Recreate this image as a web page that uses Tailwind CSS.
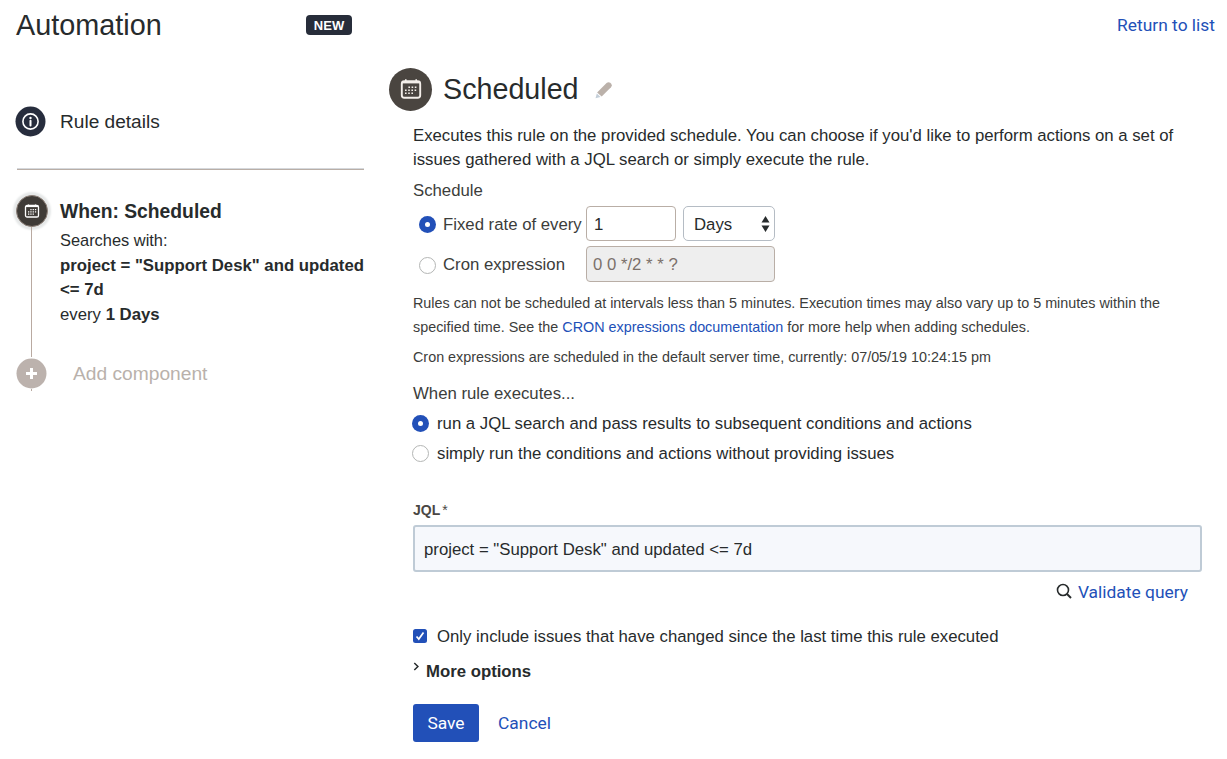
<!DOCTYPE html>
<html lang="en">
<head>
<meta charset="utf-8">
<title>Automation</title>
<script src="https://cdn.jsdelivr.net/npm/@tailwindcss/browser@4"></script>
</head>
<body class="bg-white text-[#272b2c] font-['Liberation_Sans',Arial,sans-serif] w-[1227px] h-[759px] overflow-hidden">
<header class="h-[50px] flex items-center pl-[16px] pr-[12px]">
  <h1 class="w-[290px] text-[28.8px] leading-[50px] whitespace-nowrap">Automation</h1>
  <span class="w-[46px] h-[20px] rounded-[4px] bg-[#272d3a] text-white text-[13px] font-bold flex items-center justify-center pt-px">NEW</span>
  <a class="ml-auto pt-px font-[Roboto] text-[17.4px] text-[#2250b8]">Return to list</a>
</header>
<div class="flex">
  <aside class="w-[389px] shrink-0 pl-[15px]">
    <div class="mt-[56px] h-[31px] flex items-center">
      <svg class="w-[31px] h-[31px]" viewBox="0 0 31 31"><circle cx="15.5" cy="15.5" r="15" fill="#272d3d"/><circle cx="15.5" cy="15.5" r="7.6" fill="none" stroke="#fff" stroke-width="1.6"/><circle cx="15.5" cy="12" r="1.2" fill="#fff"/><path d="M15.5 14.8v4.6" stroke="#fff" stroke-width="2" stroke-linecap="round"/></svg>
      <span class="ml-[14px] pt-px text-[19.1px]">Rule details</span>
    </div>
    <div class="ml-[2px] mt-[31px] w-[347px] h-[2px] border-t border-[#d5d8dc] bg-[#b9aea6]"></div>
    <div class="flex mt-[25px] h-[163px]">
      <div class="w-[33px] shrink-0 flex flex-col items-center">
        <div class="w-[32px] h-[32px] shrink-0 rounded-full bg-[#3f3b37] border border-[#8d8078] shadow-[0_0_2px_3px_#e6e8e8] flex items-center justify-center">
          <svg class="w-[16px] h-[16px]" viewBox="0 0 16 16" fill="none" stroke="#fff"><rect x="1.5" y="2.5" width="13" height="11.5" rx="1.6" stroke-width="1.3"/><path d="M2 3.2h12" stroke-width="1.8"/><path d="M4.5 1.4v2M11.5 1.4v2" stroke-width="1.2"/><path d="M6.3 6.6h6M4 8.9h8.3M4 11.2h6" stroke-width="1.2" stroke-dasharray="1.3 1"/></svg>
        </div>
        <div class="w-px h-[130px] bg-[#b9aaa1]"></div>
      </div>
      <div class="ml-[12px]">
        <div class="text-[19.3px] font-bold leading-[33px] whitespace-nowrap">When: Scheduled</div>
        <div class="text-[16.75px] leading-[24.7px] whitespace-nowrap"><span class="text-[16.4px]">Searches with:</span><br><b>project = "Support Desk" and updated<br>&lt;= 7d</b><br>every <b>1 Days</b></div>
      </div>
    </div>
    <div class="flex h-[32px]">
      <div class="w-[33px] flex flex-col items-center">
        <svg class="w-[31px] h-[31px] shrink-0" viewBox="0 0 31 31"><circle cx="15.5" cy="15.5" r="15" fill="#bcb2ad"/><path d="M15.5 10v11M10 15.5h11" stroke="#fff" stroke-width="3"/></svg>
        <div class="w-px h-[2px] shrink-0 bg-[#b9aaa1]"></div>
      </div>
      <span class="ml-[25px] text-[19.2px] leading-[31px] text-[#b9b1ab]">Add component</span>
    </div>
  </aside>
  <main class="w-[838px] text-[16.76px]">
    <div class="mt-[17px] h-[44px] flex items-center">
      <div class="w-[43px] h-[43px] rounded-full bg-[#4a4540] flex items-center justify-center">
        <svg class="w-[22px] h-[22px]" viewBox="0 0 22 22" fill="none" stroke="#f4efea"><rect x="1.8" y="3.3" width="18.4" height="16.4" rx="2.5" stroke-width="1.9"/><path d="M2.500 4.200h17" stroke-width="2.400"/><path d="M5.800 1.200v3M16.200 1.200v3" stroke-width="1.600"/><path d="M8.400 9.200h9M5 12.200h12.600M5 15.200h9" stroke-width="1.600" stroke-dasharray="1.600 1.600"/></svg>
      </div>
      <h2 class="ml-[11px] text-[28.7px] leading-[44px]">Scheduled</h2>
      <svg class="ml-[16px] mt-px w-[18px] h-[18px]" viewBox="0 0 17 17"><path d="M2 10.800 10.900 2q1.800-1.700 3.500-.3l.9.900q1.500 1.600-.2 3.300L6.300 14.700z" fill="#bbb1aa"/><path d="M1.700 11.800 5.200 15.200.500 16.400z" fill="#c3ced8"/></svg>
    </div>
    <div class="pl-[24px] pr-[25px]">
      <p class="mt-[13px] leading-[24px] whitespace-nowrap">Executes this rule on the provided schedule. You can choose if you'd like to perform actions on a set of<br>issues gathered with a JQL search or simply execute the rule.</p>
      <div class="mt-[7px] h-[24px] leading-[24px] text-[#3c3d3b]">Schedule</div>
      <div class="mt-[3px] h-[35px] flex items-center pl-[6px]">
        <span class="w-[17px] h-[17px] mt-px rounded-full bg-[#2250b8] flex items-center justify-center"><i class="w-[5px] h-[5px] rounded-full bg-white"></i></span>
        <span class="ml-[7px] w-[143px] pt-[2px] text-[#3c3d3b] whitespace-nowrap">Fixed rate of every</span>
        <span class="w-[90px] h-[35px] rounded-[4px] border border-[#b9aea6] pl-[7px] leading-[35px]">1</span>
        <span class="ml-[7px] w-[92px] h-[35px] rounded-[5px] border border-[#b5bcc4] pl-[10px] pr-[4px] flex items-center justify-between"><span class="pt-[2px]">Days</span><svg class="w-[9px] h-[16px]" viewBox="0 0 9 16"><path d="M4.5 0 8.5 6.5h-8zM.5 9.5h8L4.5 16z" fill="#272b2c"/></svg></span>
      </div>
      <div class="mt-[5px] h-[36px] flex items-center pl-[6px]">
        <span class="w-[17px] h-[17px] rounded-full border border-[#b4b6b5] mt-[2px]"></span>
        <span class="ml-[7px] w-[143px] pt-[2px] text-[#3c3d3b]">Cron expression</span>
        <span class="w-[189px] h-[36px] rounded-[4px] border border-[#b9aea6] bg-[#eeeeee] pl-[6px] leading-[36px] text-[#7b706a]">0 0 */2 * * ?</span>
      </div>
      <p class="mt-[9px] text-[14.37px] leading-[24px] whitespace-nowrap text-[#3c3d3b]">Rules can not be scheduled at intervals less than 5 minutes. Execution times may also vary up to 5 minutes within the<br>specified time. See the <a class="text-[#2250b8]">CRON expressions documentation</a> for more help when adding schedules.</p>
      <p class="mt-[6px] text-[14.37px] leading-[24px] whitespace-nowrap text-[#3c3d3b]">Cron expressions are scheduled in the default server time, currently: 07/05/19 10:24:15 pm</p>
      <div class="mt-[13px] h-[24px] leading-[24px] text-[#3c3d3b]">When rule executes...</div>
      <div class="mt-[2px] h-[30px] flex items-center -ml-px">
        <span class="w-[17px] h-[17px] rounded-full bg-[#2250b8] flex items-center justify-center"><i class="w-[5px] h-[5px] rounded-full bg-white"></i></span>
        <span class="ml-[8px] pt-[2px]">run a JQL search and pass results to subsequent conditions and actions</span>
      </div>
      <div class="h-[30px] flex items-center -ml-px">
        <span class="w-[17px] h-[17px] rounded-full border border-[#b4b6b5]"></span>
        <span class="ml-[8px] pt-[2px]">simply run the conditions and actions without providing issues</span>
      </div>
      <div class="mt-[32px] h-[20px] leading-[20px] text-[14px] font-bold text-[#4a4744]">JQL<span class="ml-[2px] font-normal">*</span></div>
      <div class="mt-[5px] h-[47px] w-[789px] rounded-[3px] border-2 border-[#bfcbd6] bg-[#f6f8fc] pl-[9px] leading-[45px]">project = "Support Desk" and updated &lt;= 7d</div>
      <div class="mt-[8px] h-[24px] flex items-center justify-end pr-[14px]">
        <svg class="w-[16px] h-[16px] -mt-[2px]" viewBox="0 0 16 16" fill="none" stroke="#272b2c" stroke-width="1.6"><circle cx="7" cy="7" r="5.5"/><path d="m11 11 4 4" stroke-width="1.9"/></svg>
        <a class="ml-[6px] font-[Roboto] text-[17.4px] text-[#2250b8]">Validate query</a>
      </div>
      <div class="mt-[20px] h-[24px] flex items-center">
        <svg class="w-[14px] h-[14px]" viewBox="0 0 14 14"><rect width="14" height="14" rx="2.5" fill="#2250b8"/><path d="m3.5 7.5 2.3 2.6L10.5 3.6" fill="none" stroke="#fff" stroke-width="1.7"/></svg>
        <span class="ml-[10px] pt-[2px]">Only include issues that have changed since the last time this rule executed</span>
      </div>
      <div class="mt-[11px] h-[24px] flex">
        <svg class="mt-[3px] w-[7px] h-[9px]" viewBox="0 0 7 9"><path d="m1.3 1 3.6 3.5L1.3 8" fill="none" stroke="#272b2c" stroke-width="1.5"/></svg>
        <b class="ml-[6px] leading-[26px]">More options</b>
      </div>
      <div class="mt-[21px] h-[38px] flex items-center font-[Roboto] text-[17.4px]">
        <button class="w-[66px] h-[38px] rounded-[3px] bg-[#2250b8] text-white pt-px">Save</button>
        <a class="ml-[19px] pt-px text-[#2250b8]">Cancel</a>
      </div>
    </div>
  </main>
</div>
</body>
</html>
